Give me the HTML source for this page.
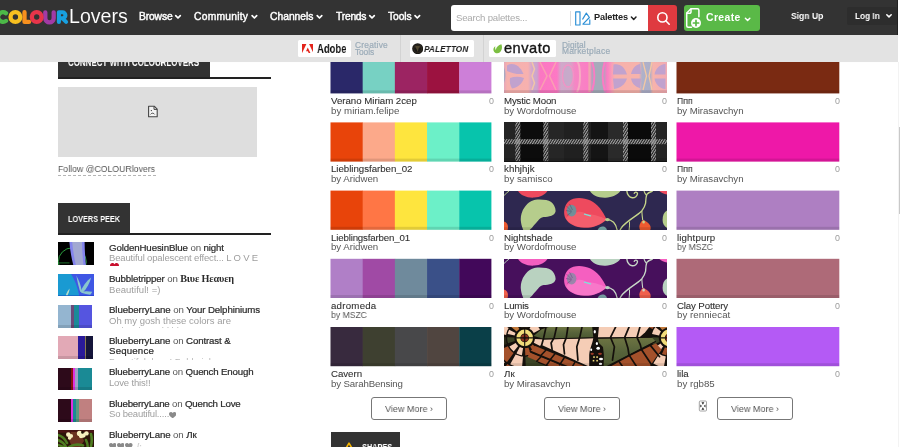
<!DOCTYPE html>
<html><head><meta charset="utf-8"><title>COLOURlovers</title>
<style>
*{box-sizing:border-box;margin:0;padding:0}
html,body{width:900px;height:447px;overflow:hidden;background:#fff}
body{position:relative;font-family:"Liberation Sans",sans-serif}
.a{position:absolute}
.t{will-change:transform;position:absolute;white-space:nowrap;line-height:1;font-family:"Liberation Sans",sans-serif}
.m{-webkit-text-stroke:0.22px #2b2b2b}
.on{color:#555}
.pal{position:absolute;display:flex;overflow:hidden}
.pal i{display:block;height:100%;flex:0 0 32.2px}
.sh{position:absolute;left:0;right:0;bottom:0;height:3px;background:rgba(0,0,0,.11)}
.btn{position:absolute;width:76px;height:23px;border:1px solid #777;border-radius:3px;background:#fff}
.th{position:absolute;left:58px;width:35.6px;height:22.7px;overflow:hidden}
.th i{position:absolute;top:0;bottom:0;display:block}
svg{position:absolute;display:block;overflow:hidden}
.gs{font-family:"Liberation Serif",serif;font-weight:700;-webkit-text-stroke:0;font-size:10.2px}
.clip{display:inline-block;overflow:hidden;vertical-align:top}

</style></head>
<body>
<!-- ===== sidebar (under the sponsor bar) ===== -->
<div class="a" style="left:58px;top:50px;width:152px;height:28.6px;background:#333"></div>
<div class="a" style="left:58px;top:76.6px;width:213px;height:2px;background:#222"></div>
<div class="a" style="left:58px;top:86.8px;width:199.2px;height:70.5px;background:#dedede"></div>
<svg style="left:147px;top:104.6px" width="12" height="13" viewBox="0 0 12 13"><path d="M1.6 1.2h5.6l3 3v7.6H1.6z" fill="#f4f4f4" stroke="#444" stroke-width="1.1" stroke-linejoin="round"/><path d="M7 1.4v3h3" fill="none" stroke="#444" stroke-width="1"/><path d="M3.6 9.4c.8-1.6 3.2-1.6 4 0M3.8 5.6h1.2" fill="none" stroke="#444" stroke-width="1"/></svg>
<div class="a" style="left:58px;top:174.6px;width:97.5px;height:0;border-top:1px dashed #b5b5b5"></div>

<div class="a" style="left:58px;top:203.2px;width:71.6px;height:31.6px;background:#333"></div>
<div class="a" style="left:58px;top:233px;width:213px;height:1.9px;background:#222"></div>

<!-- ===== palettes ===== -->
<svg style="left:0;top:0" width="900" height="447" viewBox="0 0 900 447"><rect x="330.50" y="54.2" width="32.48" height="39.2" fill="#2a2869"/><rect x="362.68" y="54.2" width="32.48" height="39.2" fill="#77d1c3"/><rect x="394.86" y="54.2" width="32.48" height="39.2" fill="#9c2462"/><rect x="427.04" y="54.2" width="32.48" height="39.2" fill="#9c1240"/><rect x="459.22" y="54.2" width="32.18" height="39.2" fill="#cd7fd8"/><rect x="330.5" y="90.4" width="160.9" height="3" fill="#000" opacity=".11"/><rect x="676.5" y="54.2" width="162.8" height="39.2" fill="#7a2a12"/><rect x="676.5" y="90.4" width="162.8" height="3" fill="#000" opacity=".11"/><rect x="330.50" y="122.4" width="32.48" height="39.2" fill="#e8440a"/><rect x="362.68" y="122.4" width="32.48" height="39.2" fill="#fca98a"/><rect x="394.86" y="122.4" width="32.48" height="39.2" fill="#fee53e"/><rect x="427.04" y="122.4" width="32.48" height="39.2" fill="#6cf0c8"/><rect x="459.22" y="122.4" width="32.18" height="39.2" fill="#07c4ac"/><rect x="330.5" y="158.6" width="160.9" height="3" fill="#000" opacity=".11"/><rect x="676.5" y="122.4" width="162.8" height="39.2" fill="#ee18a8"/><rect x="676.5" y="158.6" width="162.8" height="3" fill="#000" opacity=".11"/><rect x="330.50" y="190.6" width="32.48" height="39.2" fill="#e8440a"/><rect x="362.68" y="190.6" width="32.48" height="39.2" fill="#ff7645"/><rect x="394.86" y="190.6" width="32.48" height="39.2" fill="#fee53e"/><rect x="427.04" y="190.6" width="32.48" height="39.2" fill="#6cf0c8"/><rect x="459.22" y="190.6" width="32.18" height="39.2" fill="#07c4ac"/><rect x="330.5" y="226.8" width="160.9" height="3" fill="#000" opacity=".11"/><rect x="676.5" y="190.6" width="162.8" height="39.2" fill="#ae7fc2"/><rect x="676.5" y="226.8" width="162.8" height="3" fill="#000" opacity=".11"/><rect x="330.50" y="258.8" width="32.48" height="39.2" fill="#b07fc7"/><rect x="362.68" y="258.8" width="32.48" height="39.2" fill="#a04aa5"/><rect x="394.86" y="258.8" width="32.48" height="39.2" fill="#6f8a9c"/><rect x="427.04" y="258.8" width="32.48" height="39.2" fill="#3a5088"/><rect x="459.22" y="258.8" width="32.18" height="39.2" fill="#42085a"/><rect x="330.5" y="295.0" width="160.9" height="3" fill="#000" opacity=".11"/><rect x="676.5" y="258.8" width="162.8" height="39.2" fill="#ae6a78"/><rect x="676.5" y="295.0" width="162.8" height="3" fill="#000" opacity=".11"/><rect x="330.50" y="327.0" width="32.48" height="39.2" fill="#382a3e"/><rect x="362.68" y="327.0" width="32.48" height="39.2" fill="#3e4030"/><rect x="394.86" y="327.0" width="32.48" height="39.2" fill="#48484a"/><rect x="427.04" y="327.0" width="32.48" height="39.2" fill="#504540"/><rect x="459.22" y="327.0" width="32.18" height="39.2" fill="#0a3f48"/><rect x="330.5" y="363.2" width="160.9" height="3" fill="#000" opacity=".11"/><rect x="676.5" y="327.0" width="162.8" height="39.2" fill="#b45af5"/><rect x="676.5" y="363.2" width="162.8" height="3" fill="#000" opacity=".11"/></svg>
<svg style="left:503.5px;top:54.2px;background:#f0a0b8" width="163" height="39.2" viewBox="0 0 163 39.2" preserveAspectRatio="none"><defs><linearGradient id="mm" x1="0" x2="1" y1="0" y2="0"><stop offset="0.0000" stop-color="#e3a4b8"/><stop offset="0.0184" stop-color="#f6aeaa"/><stop offset="0.1472" stop-color="#f7aeac"/><stop offset="0.1718" stop-color="#cfa4cc"/><stop offset="0.2025" stop-color="#c8a2cc"/><stop offset="0.2209" stop-color="#fb72c0"/><stop offset="0.3252" stop-color="#fd74c2"/><stop offset="0.3497" stop-color="#cfa6c8"/><stop offset="0.4049" stop-color="#d2a2c6"/><stop offset="0.4356" stop-color="#f582c2"/><stop offset="0.5215" stop-color="#fb78c2"/><stop offset="0.5460" stop-color="#a4a8b8"/><stop offset="0.6074" stop-color="#a2a8b8"/><stop offset="0.6319" stop-color="#fb76c2"/><stop offset="0.6626" stop-color="#f99cb4"/><stop offset="0.6810" stop-color="#f7aea8"/><stop offset="0.8282" stop-color="#f7b0a8"/><stop offset="0.8466" stop-color="#acaec8"/><stop offset="0.8957" stop-color="#aaacc6"/><stop offset="0.9141" stop-color="#f7b0a8"/><stop offset="1.0000" stop-color="#f2a8b0"/></linearGradient><filter id="mb" x="-5%" y="-5%" width="110%" height="110%"><feGaussianBlur stdDeviation=".7"/></filter></defs><rect width="163" height="39.2" fill="url(#mm)"/><g filter="url(#mb)"><g fill="#bf9fcc"><path d="M3 11.500c5-3 12-1.500 16.500 8.500-6 .5-11.500-.5-16.500-3z"/><path d="M6 24c4.500-1.500 9.500-1.500 14 0-2 6-6 9.500-12 10.500-2-3-2.500-7-2-10.500z"/><path d="M0 13v16c2-5 2-11 0-16z" fill="#a6a6c0"/><path d="M109.500 10.500c6-1.500 11 2 13.500 10h-14z"/><path d="M109 24.500h14c-2 6-6 9.500-13 10.500z"/><path d="M127 20c1-5 4-9 9-10l1 10z"/><path d="M127 24.500h10l-1 9.500c-5-1-8-4.500-9-9.500z"/><path d="M150.500 20.500c1-6 5-10 11-10.500v10.500z"/><path d="M150.500 24.500h11V35c-6-.5-10-4.500-11-10.500z"/></g><g fill="none" stroke="#f9a8aa" stroke-width="1.500" opacity=".8"><path d="M36 8l7 14-7 14M52 8l-6.500 14 6.500 14"/></g><ellipse cx="64" cy="22" rx="5.500" ry="11" fill="#c4a8c8" stroke="#f88cc4" stroke-width="1.400" opacity=".85"/><path d="M73 7c4 5 4 25 0 31" fill="none" stroke="#f7a8c0" stroke-width="2"/><path d="M88 7c3 9 3 21 0 30M101 7c-3 9-3 21 0 30" fill="none" stroke="#fb76c2" stroke-width="2.100"/><path d="M85.500 7v31" stroke="#f0a2ac" stroke-width="2.300"/><path d="M139 8l3.500 14-3.500 14M148 8l-3 14 3 14" fill="none" stroke="#f4c6a0" stroke-width="1.300"/><path d="M28 8l2.500 7-2.500 7 2.500 7-2.500 7" fill="none" stroke="#f1c4a4" stroke-width="1.500"/></g><rect width="163" height="39.2" fill="#fff" opacity=".04"/><rect x="0" y="36.2" width="163" height="3" fill="#000" opacity=".11"/></svg>
<svg style="left:503.5px;top:122.4px;background:#111" width="163" height="39.2" viewBox="0 0 163 39.2" preserveAspectRatio="none"><defs><pattern id="hz" width="2.200" height="2.200" patternUnits="userSpaceOnUse" patternTransform="rotate(-58)"><rect width="2.200" height="2.200" fill="#1c1c1c"/><rect width="2.200" height="1.100" fill="#a6a6a6"/></pattern></defs><rect x="0" y="0" width="15.8" height="39.2" fill="#242424"/><rect x="15.5" y="0" width="28.8" height="39.2" fill="#0c0c0c"/><rect x="44" y="0" width="16.3" height="39.2" fill="#262626"/><rect x="60" y="0" width="27.3" height="39.2" fill="#202020"/><rect x="87" y="0" width="17.3" height="39.2" fill="#141414"/><rect x="104" y="0" width="20.3" height="39.2" fill="#2a2a2a"/><rect x="124" y="0" width="25.3" height="39.2" fill="#0a0a0a"/><rect x="149" y="0" width="14.3" height="39.2" fill="#242424"/><rect x="0" y="17.200" width="163" height="5" fill="url(#hz)"/><rect x="11.3" y="0" width="5" height="39.2" fill="url(#hz)"/><rect x="11.3" y="17.200" width="5" height="5" fill="#a8a8a8" opacity=".55"/><rect x="39.3" y="0" width="5" height="39.2" fill="url(#hz)"/><rect x="39.3" y="17.200" width="5" height="5" fill="#a8a8a8" opacity=".55"/><rect x="79.3" y="0" width="5" height="39.2" fill="url(#hz)"/><rect x="79.3" y="17.200" width="5" height="5" fill="#a8a8a8" opacity=".55"/><rect x="119" y="0" width="5" height="39.2" fill="url(#hz)"/><rect x="119" y="17.200" width="5" height="5" fill="#a8a8a8" opacity=".55"/><rect x="147" y="0" width="5" height="39.2" fill="url(#hz)"/><rect x="147" y="17.200" width="5" height="5" fill="#a8a8a8" opacity=".55"/><rect x="0" y="36.2" width="163" height="3" fill="#000" opacity=".11"/></svg>
<svg style="left:503.5px;top:190.6px;background:#2e2850" width="163" height="39.2" viewBox="0 0 163 39.2" preserveAspectRatio="none"><path d="M0 4.500C2 2.500 3.500 1.200 5 0" fill="none" stroke="#b6cd8c" stroke-width="1"/><path d="M13.500 -1C16 4 22 7 30 6.600c7-.4 12-3.400 14-7.600z" fill="#ee4a5e"/><path d="M26.200 10.700C28 9.500 30 8.900 31.500 8.700 35 8.300 39 8.500 42.200 9.100 46 9.900 49 12 50.200 14.700 51.300 16.700 51.800 18.700 51.500 20.700 51 22.700 49.500 24 47.500 24.700 45 25.600 42 25.800 39.500 26.100 37.300 26.600 35.500 27.900 34.200 29.400 32.600 31 31.400 32.600 30.200 34.100 28.600 36.200 26.800 38.400 24.800 39.600L19.500 39.600C18 36 17 32.600 16.800 29.400 16.600 27 16.900 24.800 17.500 22.700 18.200 20.200 19.300 18 20.800 16.100 22.300 13.900 24.100 12 26.200 10.700z" fill="#b6cd8c"/><path d="M65 10C69.500 6 79 6 86.500 9.400c7 3.200 12.400 10.600 16.200 19C96 34.400 88 37.200 80 36.800c-8.400-.4-15.600-3.800-18.600-9.600C59 22.400 60 14.200 65 10z" fill="#ee4a5e"/><path d="M70 22.600c4-2.800 9-2.200 12 .2 5 .2 14 2.200 20.400 5.600C96 34 88 36.800 80 36.400c-8-.4-15-3.600-18-9.200 2.400-2.200 5-3.600 8-4.600z" fill="#f9707a" opacity=".55"/><ellipse cx="67.600" cy="19.600" rx="4.800" ry="5.800" fill="#5a9aa2" opacity=".85"/><path d="M62.400 15l5 5M62 19.500l5.500 1M63 24.500l4.600-3.500M65.500 13l3 6" stroke="#2e2850" stroke-width=".5" opacity=".6"/><path d="M80.500 23.200l6 1.700" stroke="#7fe0d8" stroke-width="1.300" stroke-linecap="round"/><path d="M85.500 -1c2 5 8.500 8 16 7.700 7.500-.3 13.500-3.300 16-8.700z" fill="#b6cd8c"/><path d="M102.200 28.400c3 .2 5.600 1.100 7.400 2.900 1.900 2 3 4.800 3.600 7.900" fill="none" stroke="#c6d68a" stroke-width="1.250"/><ellipse cx="103.400" cy="28.600" rx="2.400" ry="1.600" fill="#b6cd8c"/><path d="M122.900 .2C123 2 123.600 3.400 124.600 4.600 125.600 5.900 126.800 6.600 128.200 6.800 129.600 6.900 130.800 6.500 131.800 5.700 132.800 4.900 133.400 3.900 133.500 2.800 133.500 1.900 132.900 1.300 132 1.100 131.200 1 130.600 1.500 130.300 2.300" fill="none" stroke="#c6d68a" stroke-width="1.400" stroke-linecap="round"/><path d="M148.700 0C146 .8 144 1.900 142.800 3.400 141.800 6 141.800 9 141.600 12.200 141 15.200 139.600 17.800 137.700 20 135 22.600 132 24.700 128.800 26.900 125 29.600 121.800 32 119 34.800 117.800 36.100 116.800 37.400 116 39" fill="none" stroke="#c6d68a" stroke-width="1.350"/><path d="M140 0c.6 1.800 1.400 3.200 2.500 4.400" fill="none" stroke="#c6d68a" stroke-width="1.100"/><path d="M137.800 20c.2 3 .5 6 .9 9" fill="none" stroke="#c6d68a" stroke-width="1.100"/><path d="M125.500 30.500c.2 3-.1 6-.4 8.700" fill="none" stroke="#c6d68a" stroke-width="1"/><path d="M139 28.900c2.600 1 5.600 2.600 7 5.400 1.200 2.400.6 4.400-.2 5.400h-9.400c-1-1.600-1.300-3.600-.8-5.600.5-2 1.700-3.800 3.400-5.200z" fill="#ee5a30"/><ellipse cx="139.600" cy="30.900" rx="1.300" ry="1.500" fill="#c6d68a"/><path d="M154.500 -1c2 2.600 5 4 8.500 4.400V-1z" fill="#ee4a5e"/><path d="M0 30.500c2.500.5 4 3 4 6 0 1-.2 2-.6 2.700H0z" fill="#ee5a30"/><path d="M163 19.500c-3 1.500-4.400 5-4.400 9.500 0 3.500 1.600 6.500 4.400 8z" fill="#b6cd8c"/><path d="M93.500 39.200c1-2.400 3-3.600 5.500-3.600 2 0 3.500 1.400 4 3.600z" fill="#8fd0c4" opacity=".8"/><rect x="0" y="36.2" width="163" height="3" fill="#000" opacity=".11"/></svg>
<svg style="left:503.5px;top:258.8px;background:#47105c" width="163" height="39.2" viewBox="0 0 163 39.2" preserveAspectRatio="none"><path d="M0 4.500C2 2.500 3.500 1.200 5 0" fill="none" stroke="#b9d2c0" stroke-width="1"/><path d="M13.500 -1C16 4 22 7 30 6.600c7-.4 12-3.400 14-7.600z" fill="#f55fc0"/><path d="M26.200 10.700C28 9.500 30 8.900 31.500 8.700 35 8.300 39 8.500 42.200 9.100 46 9.900 49 12 50.200 14.700 51.300 16.700 51.800 18.700 51.500 20.700 51 22.700 49.500 24 47.500 24.700 45 25.600 42 25.800 39.500 26.100 37.300 26.600 35.500 27.900 34.200 29.400 32.600 31 31.400 32.600 30.200 34.100 28.600 36.200 26.800 38.400 24.800 39.600L19.500 39.600C18 36 17 32.600 16.800 29.400 16.600 27 16.900 24.800 17.500 22.700 18.200 20.200 19.300 18 20.800 16.100 22.300 13.900 24.100 12 26.200 10.700z" fill="#b9d2c0"/><path d="M65 10C69.500 6 79 6 86.500 9.400c7 3.200 12.400 10.600 16.200 19C96 34.400 88 37.200 80 36.800c-8.400-.4-15.600-3.800-18.600-9.600C59 22.400 60 14.200 65 10z" fill="#f55fc0"/><path d="M70 22.600c4-2.800 9-2.200 12 .2 5 .2 14 2.200 20.400 5.600C96 34 88 36.800 80 36.400c-8-.4-15-3.600-18-9.200 2.400-2.200 5-3.600 8-4.600z" fill="#f98ad0" opacity=".55"/><ellipse cx="67.600" cy="19.600" rx="4.800" ry="5.800" fill="#8a8aa6" opacity=".85"/><path d="M62.400 15l5 5M62 19.500l5.500 1M63 24.500l4.600-3.500M65.500 13l3 6" stroke="#47105c" stroke-width=".5" opacity=".6"/><path d="M80.500 23.200l6 1.700" stroke="#7fe0d8" stroke-width="1.300" stroke-linecap="round"/><path d="M85.500 -1c2 5 8.500 8 16 7.700 7.500-.3 13.500-3.300 16-8.700z" fill="#b9d2c0"/><path d="M102.200 28.400c3 .2 5.600 1.100 7.400 2.900 1.900 2 3 4.800 3.600 7.900" fill="none" stroke="#c8d8c8" stroke-width="1.250"/><ellipse cx="103.400" cy="28.600" rx="2.400" ry="1.600" fill="#b9d2c0"/><path d="M122.900 .2C123 2 123.600 3.400 124.600 4.600 125.600 5.900 126.800 6.600 128.200 6.800 129.600 6.900 130.800 6.500 131.800 5.700 132.800 4.900 133.400 3.900 133.500 2.800 133.500 1.900 132.900 1.300 132 1.100 131.200 1 130.600 1.500 130.300 2.300" fill="none" stroke="#c8d8c8" stroke-width="1.400" stroke-linecap="round"/><path d="M148.700 0C146 .8 144 1.900 142.800 3.400 141.800 6 141.800 9 141.600 12.200 141 15.200 139.600 17.800 137.700 20 135 22.600 132 24.700 128.800 26.900 125 29.600 121.800 32 119 34.800 117.800 36.100 116.800 37.400 116 39" fill="none" stroke="#c8d8c8" stroke-width="1.350"/><path d="M140 0c.6 1.800 1.400 3.200 2.500 4.400" fill="none" stroke="#c8d8c8" stroke-width="1.100"/><path d="M137.800 20c.2 3 .5 6 .9 9" fill="none" stroke="#c8d8c8" stroke-width="1.100"/><path d="M125.500 30.500c.2 3-.1 6-.4 8.700" fill="none" stroke="#c8d8c8" stroke-width="1"/><path d="M139 28.900c2.600 1 5.600 2.600 7 5.400 1.200 2.400.6 4.400-.2 5.400h-9.400c-1-1.600-1.300-3.600-.8-5.600.5-2 1.700-3.800 3.400-5.200z" fill="#f0604c"/><ellipse cx="139.600" cy="30.900" rx="1.300" ry="1.500" fill="#c8d8c8"/><path d="M154.500 -1c2 2.600 5 4 8.500 4.400V-1z" fill="#f55fc0"/><path d="M0 30.500c2.500.5 4 3 4 6 0 1-.2 2-.6 2.700H0z" fill="#f0604c"/><path d="M163 19.500c-3 1.500-4.400 5-4.400 9.500 0 3.500 1.600 6.500 4.400 8z" fill="#b9d2c0"/><path d="M93.500 39.200c1-2.400 3-3.600 5.500-3.600 2 0 3.500 1.400 4 3.600z" fill="#8fd0c4" opacity=".8"/><rect x="0" y="36.2" width="163" height="3" fill="#000" opacity=".11"/></svg>
<svg style="left:503.5px;top:327.0px;background:#15100c" width="163" height="39.2" viewBox="0 0 163 39.2" preserveAspectRatio="none"><defs><linearGradient id="gw" x1="0" x2="0" y1="0" y2="1"><stop offset="0" stop-color="#6d7442"/><stop offset=".5" stop-color="#56623a"/><stop offset="1" stop-color="#4c5830"/></linearGradient></defs><rect width="163" height="39.2" fill="#15100c"/><path d="M38.1 12.7L37.9 14.0L37.6 15.4L37.2 16.6L36.7 17.9L36.1 19.1L29.8 15.7L30.1 15.0L30.4 14.3L30.6 13.5L30.8 12.7L30.9 12.0z" fill="#f5cdb6"/><path d="M34.1 22.1L33.3 23.0L32.6 23.7L31.7 24.5L30.9 25.1L30.0 25.7L26.1 19.6L26.7 19.3L27.2 18.9L27.7 18.4L28.1 18.0L28.6 17.5z" fill="#a4512b"/><path d="M26.9 27.2L25.9 27.6L24.7 27.9L23.6 28.1L22.4 28.3L21.3 28.4L21.0 21.2L21.7 21.1L22.4 21.0L23.1 20.9L23.7 20.7L24.4 20.5z" fill="#a4512b"/><path d="M17.9 28.2L16.8 28.0L15.7 27.7L14.6 27.3L13.5 26.9L12.5 26.3L15.8 20.0L16.5 20.3L17.1 20.5L17.7 20.8L18.4 20.9L19.1 21.1z" fill="#f5cdb6"/><path d="M9.7 24.5L8.7 23.6L7.7 22.6L6.8 21.6L6.1 20.5L5.4 19.4L11.7 15.9L12.1 16.6L12.5 17.2L13.0 17.8L13.6 18.4L14.2 18.9z" fill="#f5cdb6"/><path d="M4.0 16.3L3.7 15.1L3.4 13.9L3.3 12.7L3.2 11.5L3.2 10.3L10.4 10.5L10.4 11.2L10.4 12.0L10.5 12.7L10.7 13.4L10.9 14.1z" fill="#3c4426"/><path d="M3.6 7.0L3.9 6.1L4.1 5.2L4.5 4.3L4.8 3.5L5.2 2.7L11.6 6.1L11.3 6.5L11.1 7.0L10.9 7.5L10.8 8.0L10.6 8.6z" fill="#f5cdb6"/><path d="M7.1 -0.1L7.9 -1.0L8.7 -1.9L9.7 -2.7L10.6 -3.4L11.7 -4.1L15.4 2.1L14.8 2.5L14.2 2.9L13.7 3.4L13.1 3.9L12.7 4.4z" fill="#c27a3c"/><path d="M15.0 -5.7L17.0 -6.2L19.2 -6.5L21.3 -6.6L23.4 -6.4L25.5 -5.9L23.5 1.0L22.3 0.7L21.0 0.6L19.8 0.6L18.5 0.8L17.3 1.1z" fill="#2a2216"/><path d="M28.9 -4.6L30.6 -3.5L32.2 -2.3L33.6 -0.9L34.9 0.7L36.0 2.4L29.7 5.9L29.1 4.9L28.3 4.0L27.5 3.1L26.5 2.4L25.5 1.8z" fill="#f5cdb6"/><path d="M34.7 37.4L32.2 38.6L29.7 39.5L27.1 40.2L24.5 40.6L21.8 40.9L21.4 29.7L23.1 29.5L24.7 29.2L26.3 28.8L27.9 28.2L29.4 27.5z" fill="#3c4426"/><path d="M18.0 40.8L15.5 40.4L13.1 39.9L10.7 39.2L8.4 38.3L6.2 37.2L11.6 27.4L13.0 28.1L14.4 28.6L15.9 29.1L17.4 29.4L19.0 29.6z" fill="#f5cdb6"/><path d="M3.0 35.1L0.7 33.3L-1.3 31.3L-3.2 29.0L-4.8 26.7L-6.2 24.1L3.8 19.2L4.7 20.8L5.7 22.3L6.9 23.7L8.2 24.9L9.6 26.1z" fill="#a4512b"/><path d="M-7.7 20.6L-8.3 18.5L-8.8 16.4L-9.1 14.3L-9.3 12.1L-9.3 9.9L1.9 10.3L1.9 11.6L2.0 13.0L2.2 14.3L2.5 15.7L2.9 16.9z" fill="#2a2a18"/><path d="M-8.9 6.1L-8.5 3.8L-7.8 1.5L-7.0 -0.7L-6.0 -2.9L-4.8 -4.9L4.7 1.0L4.0 2.3L3.3 3.6L2.8 5.0L2.4 6.4L2.1 7.9z" fill="#f5cdb6"/><path d="M-2.6 -8.1L-0.6 -10.3L1.7 -12.3L4.1 -14.1L6.6 -15.6L9.3 -16.9L13.6 -6.5L11.9 -5.7L10.3 -4.8L8.8 -3.6L7.4 -2.4L6.1 -1.0z" fill="#a4512b"/><path d="M13.0 -18.1L16.4 -18.8L19.8 -19.1L23.2 -19.0L26.5 -18.5L29.9 -17.7L26.4 -7.0L24.4 -7.5L22.2 -7.8L20.1 -7.9L18.0 -7.7L15.9 -7.3z" fill="#c27a3c"/><path d="M15.1 54.5L11.1 53.8L7.2 52.8L3.4 51.3L-0.3 49.6L-3.7 47.5L3.3 37.0L5.7 38.5L8.3 39.8L11.0 40.8L13.8 41.5L16.7 42.0z" fill="#a4512b"/><path d="M-7.2 44.9L-10.5 41.9L-13.5 38.5L-16.2 34.9L-18.5 31.0L-20.3 26.9L-8.6 22.3L-7.3 25.2L-5.6 28.0L-3.7 30.6L-1.6 33.0L0.8 35.2z" fill="#f5cdb6"/><path d="M162.4 28.2L161.5 28.0L160.6 27.8L159.7 27.5L158.8 27.2L158.0 26.9L160.9 20.3L161.4 20.5L161.9 20.7L162.4 20.8L163.0 21.0L163.5 21.1z" fill="#a4512b"/><path d="M155.1 25.2L154.0 24.4L153.1 23.6L152.2 22.7L151.3 21.7L150.6 20.7L156.6 16.6L157.0 17.3L157.5 17.8L158.0 18.4L158.6 18.9L159.2 19.3z" fill="#f5cdb6"/><path d="M149.0 17.7L148.5 16.3L148.0 14.8L147.8 13.3L147.6 11.8L147.6 10.3L154.8 10.5L154.8 11.4L154.9 12.3L155.1 13.2L155.3 14.1L155.6 14.9z" fill="#3c4426"/><path d="M148.0 7.0L148.5 5.5L149.0 4.1L149.6 2.7L150.4 1.4L151.3 0.1L157.0 4.5L156.5 5.3L156.0 6.1L155.6 6.9L155.3 7.7L155.1 8.6z" fill="#f5cdb6"/><path d="M153.6 -2.3L155.0 -3.4L156.5 -4.4L158.1 -5.1L159.7 -5.8L161.5 -6.2L163.0 0.8L161.9 1.1L161.0 1.5L160.0 1.9L159.2 2.5L158.3 3.1z" fill="#c27a3c"/><path d="M159.8 40.4L157.6 39.9L155.4 39.3L153.3 38.5L151.3 37.5L149.3 36.4L155.2 26.9L156.4 27.6L157.7 28.2L159.0 28.7L160.4 29.1L161.8 29.4z" fill="#f5cdb6"/><path d="M146.1 34.1L144.5 32.7L143.0 31.2L141.6 29.5L140.3 27.8L139.2 26.0L148.8 20.3L149.6 21.5L150.4 22.6L151.2 23.6L152.2 24.6L153.2 25.5z" fill="#a4512b"/><path d="M138.7 -3.3L139.7 -5.1L140.8 -6.8L142.1 -8.4L143.5 -9.9L144.9 -11.3L152.5 -3.0L151.5 -2.1L150.7 -1.2L149.9 -0.2L149.2 0.9L148.5 2.0z" fill="#a4512b"/><path d="M148.0 -13.7L150.7 -15.4L153.6 -16.8L156.6 -17.9L159.7 -18.6L162.9 -19.0L163.7 -7.9L161.7 -7.6L159.8 -7.1L157.9 -6.5L156.1 -5.6L154.4 -4.5z" fill="#f5cdb6"/><path d="M29.6 9.1L37.7 2.3L44.9 0.1L92.2 0.1L92.2 10.4L39.7 11.7z" fill="url(#gw)" /><path d="M31.0 12.6L39.7 12.4L92.2 11.1L92.2 42.8L37.7 18.1L32.0 15.1z" fill="#f5cdb6" /><path d="M31.3 19.0L92.2 44.1L67.5 42.3L26.5 24.0z" fill="#a4512b" /><path d="M25.9 25.4L65.4 41.9L52.1 41.9L23.5 30.1z" fill="#a4512b" /><path d="M22.7 31.5L47.9 41.2L35.6 41.2L22.2 36.1z" fill="#3c4426" /><path d="M52.6 0.1L50.2 10.6L47.1 16.0L48.1 22.4" fill="none" stroke="#15100c" stroke-width="1.7" stroke-linejoin="round" stroke-linecap="round"/><path d="M63.9 0.1L62.3 10.6L59.5 17.6L60.5 27.0" fill="none" stroke="#15100c" stroke-width="1.7" stroke-linejoin="round" stroke-linecap="round"/><path d="M78.0 0.1L75.7 10.6L72.8 19.8L73.9 33.2" fill="none" stroke="#15100c" stroke-width="1.7" stroke-linejoin="round" stroke-linecap="round"/><path d="M41.8 1.1L39.5 11.6L37.7 18.1" fill="none" stroke="#15100c" stroke-width="1.7" stroke-linejoin="round" stroke-linecap="round"/><path d="M41.8 23.3L36.8 28.5" fill="none" stroke="#15100c" stroke-width="1.5" stroke-linejoin="round" stroke-linecap="round"/><path d="M50.8 27.0L46.1 32.8" fill="none" stroke="#15100c" stroke-width="1.5" stroke-linejoin="round" stroke-linecap="round"/><path d="M60.1 31.0L55.6 37.9" fill="none" stroke="#15100c" stroke-width="1.5" stroke-linejoin="round" stroke-linecap="round"/><path d="M70.8 35.3L67.5 41.2" fill="none" stroke="#15100c" stroke-width="1.5" stroke-linejoin="round" stroke-linecap="round"/><path d="M36.8 30.1L32.7 34.2" fill="none" stroke="#15100c" stroke-width="1.5" stroke-linejoin="round" stroke-linecap="round"/><path d="M45.7 33.8L42.4 38.2" fill="none" stroke="#15100c" stroke-width="1.5" stroke-linejoin="round" stroke-linecap="round"/><path d="M26.5 24.4L68.5 41.9" fill="none" stroke="#15100c" stroke-width="1.6" stroke-linejoin="round" stroke-linecap="round"/><path d="M39.7 12.0L92.2 10.7" fill="none" stroke="#15100c" stroke-width="1.0" stroke-linejoin="round" stroke-linecap="round"/><path d="M88.2 0.1L94.9 0.1L93.9 10.4C94.9 16.5 99.6 20.7 99.6 27.9L99.0 40.2L85.2 40.2L85.2 27.9C85.7 20.7 88.8 16.5 89.3 10.4z" fill="#15100c"/><ellipse cx="90.8" cy="4.7" rx="1.1" ry="1.7" fill="#fff"/><ellipse cx="92.9" cy="16.5" rx="1.1" ry="1.5" fill="#fff"/><ellipse cx="94.2" cy="21.2" rx="1.8" ry="1.5" fill="#fff"/><ellipse cx="88.2" cy="26.8" rx="1.7" ry="1.1" fill="#9a3a26"/><ellipse cx="96.0" cy="26.8" rx="2" ry="1.1" fill="#9a3a26"/><ellipse cx="97.0" cy="32.0" rx="2" ry="1.3" fill="#fff"/><ellipse cx="96.5" cy="36.9" rx="1.7" ry="1.1" fill="#fff"/><ellipse cx="87.2" cy="22.7" rx="1" ry="1.3" fill="#fff"/><rect x="89.2" y="29.3" width="1.600" height="1.600" fill="#f2dc7a"/><rect x="92.3" y="29.3" width="1.600" height="1.600" fill="#f2dc7a"/><rect x="88.7" y="32.9" width="1.600" height="1.600" fill="#f2dc7a"/><rect x="92.3" y="32.9" width="1.600" height="1.600" fill="#f2dc7a"/><path d="M94.9 0.1L145.3 0.1L141.2 5.2L135.6 10.2L93.9 10.6z" fill="#f5cdb6" /><path d="M93.9 11.6L147.9 10.6L151.5 14.3L124.8 28.1L101.6 40.2L99.6 40.2L99.9 27.9L99.0 20.1L94.9 16.0z" fill="url(#gw)" /><path d="M105.2 40.2L126.0 29.1L152.0 16.3L157.7 22.7L151.5 31.0L145.3 40.2z" fill="#a4512b" /><path d="M111.6 0.1L106.5 10.4L110.4 19.8L108.5 33.2" fill="none" stroke="#15100c" stroke-width="1.7" stroke-linejoin="round" stroke-linecap="round"/><path d="M125.0 0.1L120.7 10.4L123.9 20.9L125.0 27.9" fill="none" stroke="#15100c" stroke-width="1.7" stroke-linejoin="round" stroke-linecap="round"/><path d="M135.9 0.1L133.0 10.4L136.3 17.6L137.3 21.9" fill="none" stroke="#15100c" stroke-width="1.7" stroke-linejoin="round" stroke-linecap="round"/><path d="M93.9 11.1L147.9 10.2" fill="none" stroke="#15100c" stroke-width="1.1" stroke-linejoin="round" stroke-linecap="round"/><path d="M101.6 40.2L124.8 28.2L151.5 14.5" fill="none" stroke="#15100c" stroke-width="1.1" stroke-linejoin="round" stroke-linecap="round"/><path d="M125.6 28.9L133.0 40.2" fill="none" stroke="#15100c" stroke-width="1.7" stroke-linejoin="round" stroke-linecap="round"/><path d="M137.6 22.7L147.4 37.6" fill="none" stroke="#15100c" stroke-width="1.7" stroke-linejoin="round" stroke-linecap="round"/><path d="M146.4 18.4L155.6 29.7" fill="none" stroke="#15100c" stroke-width="1.7" stroke-linejoin="round" stroke-linecap="round"/><path d="M115.0 34.6L119.1 40.2" fill="none" stroke="#15100c" stroke-width="1.7" stroke-linejoin="round" stroke-linecap="round"/><circle cx="20.7" cy="10.9" r="9.300" fill="#15100c"/><circle cx="20.7" cy="10.9" r="6.300" fill="none" stroke="#f2dc7a" stroke-width="4"/><circle cx="20.7" cy="10.9" r="3.700" fill="#8c3420"/><circle cx="20.7" cy="10.9" r="1.700" fill="#5a2418"/><path d="M11.7 10.9h18M20.7 1.9v18" stroke="#15100c" stroke-width="1.100"/><circle cx="165.1" cy="10.9" r="9.300" fill="#15100c"/><circle cx="165.1" cy="10.9" r="6.300" fill="none" stroke="#f2dc7a" stroke-width="4"/><circle cx="165.1" cy="10.9" r="3.700" fill="#8c3420"/><circle cx="165.1" cy="10.9" r="1.700" fill="#5a2418"/><path d="M156.1 10.9h18M165.1 1.9v18" stroke="#15100c" stroke-width="1.100"/><rect x="0" y="36.2" width="163" height="3" fill="#000" opacity=".11"/></svg>
<div class="btn" style="left:371.0px;top:397.3px"></div>
<div class="btn" style="left:544.0px;top:397.3px"></div>
<div class="btn" style="left:717.0px;top:397.3px"></div>
<div class="a" style="left:330.5px;top:431.8px;width:69px;height:20px;background:#333"></div>
<svg style="left:343.5px;top:441.5px" width="10" height="8" viewBox="0 0 10 8"><path d="M5 1.2L9.4 8.6H.6z" fill="none" stroke="#f5b400" stroke-width="1.6" stroke-linejoin="round"/></svg>
<svg style="left:698px;top:400px" width="10" height="12" viewBox="0 0 10 12"><rect x="1.300" y="1" width="7.200" height="10" rx="1" fill="#fff" stroke="#9a9a9a" stroke-width=".9"/><path d="M3.500 2.200h2.800L4.900 4.800zM3.500 9.800h2.800L4.900 7.200zM2.300 4.400v3.200L4 6zM7.500 4.400v3.200L5.800 6z" fill="#2a2a2a"/></svg>

<!-- ===== thumbs ===== -->
<div class="th" style="top:242.2px;background:#000" id="th0">
<svg style="left:0;top:0" width="36" height="23" viewBox="0 0 36 23"><circle cx="14.300" cy="19.800" r="14" fill="none" stroke="#2a9a3c" stroke-width="1"/><path d="M0 20.900h11.500" stroke="#1f7a30" stroke-width=".9"/><path d="M11.400 0h15.200c.1 8 .5 15 1.300 23H15.300C13.300 15 12 8 11.400 0z" fill="#8484ee"/><path d="M14.200 0h9.800c.1 8 .6 15 1.500 23h-7.600C16 15 14.800 8 14.200 0z" fill="#a2a8d2"/></svg></div>
<div class="th" style="top:273.6px;background:#1a98d0" id="th1">
<svg style="left:0;top:0" width="36" height="23" viewBox="0 0 36 23"><rect width="36" height="23" fill="#1a9ad2"/><path d="M13 0h23v23H21.500C20 14 17 6 13 0z" fill="#3f57e4"/><g fill="#93d3cb" opacity=".9"><path d="M22.200 18c-1.600-5.600-3-11-3.900-16.600 2.800 4.800 4.600 10 5.500 15.800z"/><path d="M22.600 17.600c2-5.400 5.600-10.400 10.600-14.200-1.600 6-4.400 11-8.600 15.400z"/><path d="M23 17.800c3.600-.9 7.400-.9 11.200 0-.6 1.200-1.200 2.200-2 3-3-.4-6-1-8.800-2z"/></g><path d="M7.800 21.200c.9-2.600 2.200-4.800 3.800-6.600-.3 2.600-1 4.800-2.100 6.800z" fill="#b8dcc8"/><rect y="21.300" width="36" height="1.700" fill="#1030b8" opacity=".55"/></svg></div>
<div class="th" style="top:305px;width:34.4px"><i style="left:0;width:13px;background:#94b5d0"></i><i style="left:12.9px;width:2.7px;background:#6a4a7a"></i><i style="left:15.5px;width:5.6px;background:#1a8a98"></i><i style="left:21px;width:14px;background:#5555e0"></i><b class="sh"></b></div>
<div class="th" style="top:336.4px;width:35px"><i style="left:0;width:19.7px;background:#e2a9b6"></i><i style="left:19.6px;width:7.5px;background:#2a1a9a"></i><i style="left:27px;width:1.2px;background:#8a7a50"></i><i style="left:28.1px;width:7px;background:#15153a"></i><b class="sh"></b></div>
<div class="th" style="top:367.8px;width:34.2px"><i style="left:0;width:13px;background:#2d0a1a"></i><i style="left:12.9px;width:2.6px;background:#8a1010"></i><i style="left:15.4px;width:1.8px;background:#e030e0"></i><i style="left:17.1px;width:3px;background:#a0a0c4"></i><i style="left:20px;width:14.3px;background:#1a8a95"></i><b class="sh"></b></div>
<div class="th" style="top:399.2px;width:34.2px"><i style="left:0;width:13px;background:#2d0a1a"></i><i style="left:12.9px;width:2.6px;background:#e030e0"></i><i style="left:15.4px;width:2.6px;background:#1a8a95"></i><i style="left:17.9px;width:3.2px;background:#5a9a80"></i><i style="left:21px;width:13.3px;background:#c08080"></i><b class="sh"></b></div>
<div class="th" style="top:430.4px;background:#2a1408" id="th6">
<svg style="left:0;top:0" width="36" height="23" viewBox="0 0 36 23"><rect width="36" height="23" fill="#2c150a"/><path d="M0 1.500h36" stroke="#4a1414" stroke-width="2.500"/><path d="M13 2h10l3 9-4 6h-8l-3-7z" fill="#6a3320"/><g fill="none" stroke="#4f7d22" stroke-width="2.600" stroke-linecap="round"><path d="M0 5c4 1 7 4 9 8M0 10c3 1 6 3 8 7M0 15c3 .5 6 2 8 5M11 17c4-2.500 9-3 14-1.500M9 22c5-3 11-3.500 17-1M28 10c1.500 3 2 6 1.500 9M33 4c1 4 1 8 0 12"/></g><g fill="#f7f0c0"><circle cx="10.300" cy="4.600" r="2.300"/><circle cx="13" cy="6" r="2.100"/><circle cx="11.600" cy="8" r="1.800"/><circle cx="21.500" cy="3.400" r="2.600"/><circle cx="25" cy="5" r="2.700"/><circle cx="28.500" cy="3.400" r="2.200"/><circle cx="23" cy="6.300" r="2"/></g><circle cx="24.500" cy="2.400" r="1.300" fill="#1c1208"/></svg></div>

<!-- hearts in comments -->
<svg style="left:109.7px;top:263.4px" width="9" height="2.5" viewBox="0 0 8 2.2" preserveAspectRatio="none"><path d="M4 7C1.500 5 0 3.600 0 2.100 0 .9.900 0 2.100 0 2.900 0 3.600.4 4 1.100 4.400.4 5.100 0 5.900 0 7.100 0 8 .9 8 2.100 8 3.600 6.500 5 4 7z" fill="#c8102e"/></svg>
<svg style="left:168.7px;top:411.7px" width="7.4" height="6.3" viewBox="0 0 8 7" preserveAspectRatio="none"><path d="M4 7C1.500 5 0 3.600 0 2.100 0 .9.900 0 2.100 0 2.900 0 3.600.4 4 1.100 4.400.4 5.100 0 5.900 0 7.100 0 8 .9 8 2.100 8 3.600 6.500 5 4 7z" fill="#8a8a8a"/></svg>
<svg style="left:108.8px;top:443px" width="7.6" height="6.5" viewBox="0 0 8 7" preserveAspectRatio="none"><path d="M4 7C1.500 5 0 3.600 0 2.100 0 .9.900 0 2.100 0 2.900 0 3.600.4 4 1.100 4.400.4 5.100 0 5.900 0 7.100 0 8 .9 8 2.100 8 3.600 6.500 5 4 7z" fill="#8a8a8a"/></svg>
<svg style="left:116.9px;top:443px" width="7.6" height="6.5" viewBox="0 0 8 7" preserveAspectRatio="none"><path d="M4 7C1.500 5 0 3.600 0 2.100 0 .9.900 0 2.100 0 2.900 0 3.600.4 4 1.100 4.400.4 5.100 0 5.900 0 7.100 0 8 .9 8 2.100 8 3.600 6.500 5 4 7z" fill="#8a8a8a"/></svg>
<svg style="left:125.0px;top:443px" width="7.6" height="6.5" viewBox="0 0 8 7" preserveAspectRatio="none"><path d="M4 7C1.500 5 0 3.600 0 2.100 0 .9.900 0 2.100 0 2.900 0 3.600.4 4 1.100 4.400.4 5.100 0 5.900 0 7.100 0 8 .9 8 2.100 8 3.600 6.500 5 4 7z" fill="#8a8a8a"/></svg>


<!-- ===== CONNECT tab text (clipped by sponsor bar) ===== -->
<span class="t" id="connect" style="left:68px;top:57.4px;font-size:11px;font-weight:700;color:#fff;transform:scaleX(.722);transform-origin:0 0">CONNECT WITH COLOURLOVERS</span>

<!-- ===== sponsor bar ===== -->
<div class="a" style="left:0;top:34.6px;width:898px;height:27.2px;background:#e3e3e3;box-shadow:0 .4px .6px rgba(0,0,0,.12)"></div>
<div class="a" style="left:399.6px;top:35px;width:1px;height:26.6px;background:#d3d3d3"></div>
<div class="a" style="left:482.8px;top:35px;width:1px;height:26.6px;background:#d3d3d3"></div>
<div class="a" style="left:297.8px;top:40.3px;width:52.9px;height:16.5px;background:#fff;border-radius:1.5px"></div>
<div class="a" style="left:409.7px;top:40.3px;width:64.5px;height:16.5px;background:#fff;border-radius:1.5px"></div>
<div class="a" style="left:489.2px;top:40.3px;width:67px;height:16.5px;background:#fff;border-radius:1.5px"></div>
<!-- adobe -->
<svg style="left:301.6px;top:44.2px" width="11.5" height="9.2" viewBox="0 0 11.5 9.2"><path d="M0 0h4.400L0 9.200zM7.100 0h4.400v9.200zM5.750 3.400L8.500 9.200H6.700L5.900 7.300H4z" fill="#e3241b"/></svg>
<span class="t" style="left:316.9px;top:42.3px;font-size:13px;font-weight:700;color:#111;transform:scaleX(.728);transform-origin:0 0">Adobe</span>
<!-- paletton -->
<svg style="left:411.8px;top:43px" width="11.4" height="11.4" viewBox="0 0 11.4 11.4"><circle cx="5.700" cy="5.700" r="5.500" fill="#1b1916"/><path d="M2.700 3.800c1.700-1.400 4.300-1.400 5.900.1-.9.300-1.600.8-2 1.600l-.8 3.400-1.400-3.200c-.4-.9-1-1.500-1.700-1.900z" fill="#4f4630"/><circle cx="5.700" cy="5.700" r="4" fill="none" stroke="#3a3426" stroke-width=".6"/></svg>
<span class="t" style="left:423.6px;top:44px;font-size:9.9px;font-weight:700;font-style:italic;color:#1f1f1f;transform:scaleX(.845);transform-origin:0 0">PALETTON</span>
<!-- envato -->
<svg style="left:493px;top:44.3px" width="9.2" height="9.8" viewBox="0 0 9.2 9.8"><path d="M8.300.3c.9 1.300 1.300 5.700-1.300 7.900C4.900 10 1.700 9.500.7 6.900-.2 4.700 1.100 2.900 2.400 2.200c-.4 1.300-.3 2.800.3 3.700C3.500 3 5.600.9 8.300.3z" fill="#7cbf42"/></svg>
<span class="t" style="left:503.6px;top:40.85px;font-size:14.6px;font-weight:400;color:#151515;letter-spacing:.5px;-webkit-text-stroke:.38px #151515">envato</span>

<!-- ===== header ===== -->
<div class="a" style="left:0;top:0;width:898px;height:34.6px;background:#333"></div>
<div class="a" style="left:897px;top:0;width:1px;height:34.6px;background:#222"></div>
<div class="a" style="left:846.8px;top:7.2px;width:50.2px;height:18.2px;background:#2d2d2d;border-radius:2px"></div>
<!-- logo -->
<svg style="left:0;top:6px" width="72" height="24" viewBox="0 6 72 24" id="logo" fill="none" stroke-linecap="round" stroke-linejoin="round" stroke-width="4.300">
<path d="M53.700 12.300v5.900a4.200 4.200 0 0 1-8.400 0v-5.900" stroke="#a23aa5"/>
<path d="M58.900 21.900v-9.700h3.500a3 3 0 0 1 0 6h-3.300M62.500 18.400l3.600 3.500" stroke="#18a0e0" stroke-width="4.100"/>
<circle cx="36.700" cy="17.050" r="4.850" stroke="#e8354a"/>
<path d="M24.500 12.200v9.700h4.500" stroke="#f7901e"/>
<circle cx="15.400" cy="17.050" r="4.850" stroke="#f8c020"/>
<path d="M6 13.200a4.850 4.850 0 1 0 0 7.700" stroke="#4cb848"/>
</svg>
<span class="t" style="left:68.7px;top:7.4px;font-size:19.6px;font-weight:400;color:#fff;-webkit-text-stroke:.1px #333">Lovers</span>
<!-- search -->
<div class="a" style="left:450.8px;top:4.800px;width:197.400px;height:26px;background:#fff;border-radius:3px 0 0 3px"></div>
<div class="a" style="left:570px;top:10.500px;width:1px;height:15.500px;background:#ddd"></div>
<svg style="left:574.5px;top:10.800px" width="16" height="16" viewBox="0 0 16 16" fill="none" stroke="#2b8fd6" stroke-width="1.150" stroke-linejoin="round" stroke-linecap="round"><rect x=".7" y=".8" width="4.300" height="13.200"/><path d="M7.700 8.100l3.600-6 3.100 4.400-6.500 6.700h6.900V8.900"/></svg>
<svg style="left:630px;top:15.300px" width="9" height="7" viewBox="0 0 9 7" fill="none" stroke="#222" stroke-width="1.500" stroke-linecap="round" stroke-linejoin="round"><path d="M1.400 2l2.300 2.400L6 2"/></svg>
<div class="a" style="left:648.200px;top:4.800px;width:29px;height:26px;background:#df3a40;border-radius:0 3px 3px 0"></div>
<svg style="left:655.500px;top:10.500px" width="15" height="15" viewBox="0 0 15 15" fill="none" stroke="#fff" stroke-width="1.600" stroke-linecap="round"><circle cx="6.400" cy="6.400" r="4.600"/><path d="M9.800 9.800l3.400 3.400"/></svg>
<!-- create -->
<div class="a" style="left:683.8px;top:5.2px;width:76px;height:25.8px;background:#5ab947;border-radius:3px"></div>
<svg style="left:685px;top:7px" width="18" height="22" viewBox="0 0 18 22" fill="none" stroke="#fff" stroke-width="1.500" stroke-linejoin="round" stroke-linecap="round"><path d="M6.500 20.300H3.200a1.500 1.500 0 0 1-1.500-1.500V6L6 1.800h6.400a1.500 1.500 0 0 1 1.500 1.500v6.500"/><path d="M1.900 6.200h2.900a1.200 1.200 0 0 0 1.200-1.200V2"/><circle cx="11" cy="16" r="5" fill="#fff" stroke="none"/><path d="M11 13.400v5.200M8.400 16h5.200" stroke="#5ab947" stroke-width="1.700"/></svg>
<!-- chevrons -->
<svg style="left:0;top:0" width="900" height="35" viewBox="0 0 900 35" fill="none" stroke="#fff" stroke-width="1.700" stroke-linecap="round" stroke-linejoin="round">
<path d="M175.700 15.600l2.300 2.400 2.300-2.400M252.100 15.600l2.300 2.400 2.300-2.400M317.200 15.600l2.300 2.400 2.300-2.400M369.700 15.600l2.300 2.400 2.300-2.400M415 15.600l2.300 2.400 2.300-2.400"/>
<path d="M745.400 18.300l2.200 2.200 2.200-2.200" stroke-width="1.500"/>
<path d="M886.800 14.700l2.200 2.200 2.200-2.200" stroke-width="1.500"/>
</svg>
<!-- right edge strip / scrollbar hint -->
<div class="a" style="left:898px;top:0;width:2px;height:447px;background:#fff"></div>
<div class="a" style="left:898px;top:62px;width:1px;height:385px;background:#f3f3f3"></div>
<div class="a" style="left:899px;top:127px;width:1px;height:87px;background:#c9c9c9"></div>

<span class="t" style="left:139.2px;top:11.68px;font-size:10.3px;font-weight:400;color:#fff;letter-spacing:-0.141px;-webkit-text-stroke:.42px #fff;">Browse</span>
<span class="t" style="left:194.0px;top:11.68px;font-size:10.3px;font-weight:400;color:#fff;letter-spacing:0.236px;-webkit-text-stroke:.42px #fff;">Community</span>
<span class="t" style="left:269.8px;top:11.68px;font-size:10.3px;font-weight:400;color:#fff;letter-spacing:-0.002px;-webkit-text-stroke:.42px #fff;">Channels</span>
<span class="t" style="left:336.0px;top:11.68px;font-size:10.3px;font-weight:400;color:#fff;letter-spacing:-0.229px;-webkit-text-stroke:.42px #fff;">Trends</span>
<span class="t" style="left:388.4px;top:11.68px;font-size:10.3px;font-weight:400;color:#fff;letter-spacing:-0.089px;-webkit-text-stroke:.42px #fff;">Tools</span>
<span class="t" style="left:456.3px;top:13.47px;font-size:9.6px;font-weight:400;color:#aaa;letter-spacing:-0.193px;">Search palettes...</span>
<span class="t" style="left:593.8px;top:12.61px;font-size:9.2px;font-weight:700;color:#222;letter-spacing:-0.169px;">Palettes</span>
<span class="t" style="left:705.8px;top:13.20px;font-size:10.4px;font-weight:700;color:#fff;letter-spacing:0.390px;">Create</span>
<span class="t" style="left:790.7px;top:11.04px;font-size:9.4px;font-weight:700;color:#fff;transform:scaleX(0.9119);transform-origin:0 0;">Sign Up</span>
<span class="t" style="left:855.0px;top:11.04px;font-size:9.4px;font-weight:700;color:#fff;transform:scaleX(0.8782);transform-origin:0 0;">Log In</span>
<span class="t" style="left:355.0px;top:40.59px;font-size:8.4px;font-weight:400;color:#9babb8;letter-spacing:0.227px;-webkit-text-stroke:.2px #9babb8;">Creative</span>
<span class="t" style="left:355.0px;top:47.69px;font-size:8.4px;font-weight:400;color:#9babb8;letter-spacing:-0.113px;-webkit-text-stroke:.2px #9babb8;">Tools</span>
<span class="t" style="left:561.5px;top:40.59px;font-size:8.4px;font-weight:400;color:#9babb8;letter-spacing:0.060px;-webkit-text-stroke:.2px #9babb8;">Digital</span>
<span class="t" style="left:561.5px;top:46.69px;font-size:8.4px;font-weight:400;color:#9babb8;letter-spacing:0.243px;-webkit-text-stroke:.2px #9babb8;">Marketplace</span>
<span class="t" style="left:58.0px;top:163.87px;font-size:9.6px;font-weight:400;color:#555;transform:scaleX(0.9085);transform-origin:0 0;">Follow @COLOURlovers</span>
<span class="t" style="left:68.0px;top:214.34px;font-size:9.4px;font-weight:700;color:#fff;transform:scaleX(0.7798);transform-origin:0 0;">LOVERS PEEK</span>
<span class="t" style="left:108.5px;top:242.59px;font-size:9.7px;font-weight:400;color:#2b2b2b;letter-spacing:-0.124px;"><span class="m">GoldenHuesinBlue</span> <span class="on">on</span> <span class="m">night</span></span>
<span class="t" style="left:108.5px;top:253.46px;font-size:9.5px;font-weight:400;color:#9e9e9e;letter-spacing:-0.151px;">Beautiful opalescent effect... L O V E</span>
<span class="t" style="left:108.5px;top:273.74px;font-size:9.7px;font-weight:400;color:#2b2b2b;letter-spacing:-0.155px;"><span class="m">Bubbletripper</span> <span class="on">on</span> <span class="m gs">Βιυε Ηεαυεη</span></span>
<span class="t" style="left:108.5px;top:284.51px;font-size:9.5px;font-weight:400;color:#9e9e9e;letter-spacing:0.041px;">Beautiful! =)</span>
<span class="t" style="left:108.5px;top:304.89px;font-size:9.7px;font-weight:400;color:#2b2b2b;letter-spacing:-0.109px;"><span class="m">BlueberryLane</span> <span class="on">on</span> <span class="m">Your Delphiniums</span></span>
<span class="t" style="left:108.5px;top:315.56px;font-size:9.5px;font-weight:400;color:#9e9e9e;letter-spacing:0.020px;">Oh my gosh these colors are</span>
<span class="t" style="left:108.5px;top:336.04px;font-size:9.7px;font-weight:400;color:#2b2b2b;letter-spacing:-0.128px;"><span class="m">BlueberryLane</span> <span class="on">on</span> <span class="m">Contrast &amp;</span></span>
<span class="t" style="left:108.5px;top:346.49px;font-size:9.7px;font-weight:400;color:#2b2b2b;letter-spacing:0.170px;"><span class="m">Sequence</span></span>
<span class="t" style="left:108.5px;top:367.19px;font-size:9.7px;font-weight:400;color:#2b2b2b;letter-spacing:-0.158px;"><span class="m">BlueberryLane</span> <span class="on">on</span> <span class="m">Quench Enough</span></span>
<span class="t" style="left:108.5px;top:377.66px;font-size:9.5px;font-weight:400;color:#9e9e9e;letter-spacing:-0.165px;">Love this!!</span>
<span class="t" style="left:108.5px;top:399.34px;font-size:9.7px;font-weight:400;color:#2b2b2b;letter-spacing:-0.191px;"><span class="m">BlueberryLane</span> <span class="on">on</span> <span class="m">Quench Love</span></span>
<span class="t" style="left:108.5px;top:408.71px;font-size:9.5px;font-weight:400;color:#9e9e9e;letter-spacing:-0.193px;">So beautiful.....</span>
<span class="t" style="left:108.5px;top:430.49px;font-size:9.7px;font-weight:400;color:#2b2b2b;letter-spacing:-0.122px;"><span class="m">BlueberryLane</span> <span class="on">on</span> <span class="m">Лк</span></span>
<span class="t" style="left:108.5px;top:326.16px;font-size:9.5px;font-weight:400;color:#b9b9b9;letter-spacing:-0.080px;"><span class="clip" style="height:2.3px">so lovely! Bold blues.</span></span>
<span class="t" style="left:108.5px;top:356.56px;font-size:9.5px;font-weight:400;color:#b9b9b9;letter-spacing:-0.024px;"><span class="clip" style="height:2.6px">Beautiful deep! Bold pink</span></span>
<span class="t" style="left:136.7px;top:441.71px;font-size:10.5px;font-weight:400;color:#aaa;transform:scaleX(0.7007);transform-origin:0 0;">(:</span>
<span class="t" style="left:330.7px;top:95.99px;font-size:9.7px;font-weight:400;color:#303030;letter-spacing:-0.020px;-webkit-text-stroke:.1px #303030;">Verano Miriam 2cep</span>
<span class="t" style="left:330.7px;top:105.59px;font-size:9.7px;font-weight:400;color:#565656;letter-spacing:0.035px;">by miriam.felipe</span>
<span class="t" style="left:489.3px;top:96.77px;font-size:8.9px;font-weight:400;color:#9c9c9c;letter-spacing:0.062px;">0</span>
<span class="t" style="left:330.7px;top:164.19px;font-size:9.7px;font-weight:400;color:#303030;letter-spacing:-0.026px;-webkit-text-stroke:.1px #303030;">Lieblingsfarben_02</span>
<span class="t" style="left:330.7px;top:173.79px;font-size:9.7px;font-weight:400;color:#565656;letter-spacing:-0.019px;">by Aridwen</span>
<span class="t" style="left:489.3px;top:164.97px;font-size:8.9px;font-weight:400;color:#9c9c9c;letter-spacing:0.062px;">0</span>
<span class="t" style="left:330.7px;top:233.39px;font-size:9.7px;font-weight:400;color:#303030;letter-spacing:-0.165px;-webkit-text-stroke:.1px #303030;">Lieblingsfarben_01</span>
<span class="t" style="left:330.7px;top:241.99px;font-size:9.7px;font-weight:400;color:#565656;letter-spacing:-0.019px;">by Aridwen</span>
<span class="t" style="left:489.3px;top:234.17px;font-size:8.9px;font-weight:400;color:#9c9c9c;letter-spacing:0.062px;">0</span>
<span class="t" style="left:330.7px;top:300.59px;font-size:9.7px;font-weight:400;color:#303030;letter-spacing:0.234px;-webkit-text-stroke:.1px #303030;">adromeda</span>
<span class="t" style="left:330.7px;top:310.19px;font-size:9.7px;font-weight:400;color:#565656;transform:scaleX(0.8916);transform-origin:0 0;">by MSZC</span>
<span class="t" style="left:489.3px;top:302.37px;font-size:8.9px;font-weight:400;color:#9c9c9c;letter-spacing:0.062px;">0</span>
<span class="t" style="left:330.7px;top:368.79px;font-size:9.7px;font-weight:400;color:#303030;letter-spacing:-0.039px;-webkit-text-stroke:.1px #303030;">Cavern</span>
<span class="t" style="left:330.7px;top:379.39px;font-size:9.7px;font-weight:400;color:#565656;letter-spacing:-0.140px;">by SarahBensing</span>
<span class="t" style="left:489.3px;top:369.57px;font-size:8.9px;font-weight:400;color:#9c9c9c;letter-spacing:0.062px;">0</span>
<span class="t" style="left:385.0px;top:403.70px;font-size:9.8px;font-weight:400;color:#555;transform:scaleX(0.9214);transform-origin:0 0;">View More ›</span>
<span class="t" style="left:503.7px;top:95.99px;font-size:9.7px;font-weight:400;color:#303030;letter-spacing:-0.189px;-webkit-text-stroke:.1px #303030;">Mystic Moon</span>
<span class="t" style="left:503.7px;top:105.59px;font-size:9.7px;font-weight:400;color:#565656;letter-spacing:-0.054px;">by Wordofmouse</span>
<span class="t" style="left:662.3px;top:96.77px;font-size:8.9px;font-weight:400;color:#9c9c9c;letter-spacing:0.062px;">0</span>
<span class="t" style="left:503.7px;top:164.19px;font-size:9.7px;font-weight:400;color:#303030;letter-spacing:0.078px;-webkit-text-stroke:.1px #303030;">khhjhjk</span>
<span class="t" style="left:503.7px;top:173.79px;font-size:9.7px;font-weight:400;color:#565656;letter-spacing:0.025px;">by samisco</span>
<span class="t" style="left:662.3px;top:164.97px;font-size:8.9px;font-weight:400;color:#9c9c9c;letter-spacing:0.062px;">0</span>
<span class="t" style="left:503.7px;top:233.39px;font-size:9.7px;font-weight:400;color:#303030;letter-spacing:-0.032px;-webkit-text-stroke:.1px #303030;">Nightshade</span>
<span class="t" style="left:503.7px;top:241.99px;font-size:9.7px;font-weight:400;color:#565656;letter-spacing:-0.054px;">by Wordofmouse</span>
<span class="t" style="left:662.3px;top:234.17px;font-size:8.9px;font-weight:400;color:#9c9c9c;letter-spacing:0.062px;">0</span>
<span class="t" style="left:503.7px;top:300.59px;font-size:9.7px;font-weight:400;color:#303030;letter-spacing:-0.229px;-webkit-text-stroke:.1px #303030;">Lumis</span>
<span class="t" style="left:503.7px;top:310.19px;font-size:9.7px;font-weight:400;color:#565656;letter-spacing:-0.054px;">by Wordofmouse</span>
<span class="t" style="left:662.3px;top:302.37px;font-size:8.9px;font-weight:400;color:#9c9c9c;letter-spacing:0.062px;">0</span>
<span class="t" style="left:503.7px;top:368.79px;font-size:9.7px;font-weight:400;color:#303030;letter-spacing:0.045px;-webkit-text-stroke:.1px #303030;">Лк</span>
<span class="t" style="left:503.7px;top:379.39px;font-size:9.7px;font-weight:400;color:#565656;letter-spacing:-0.058px;">by Mirasavchyn</span>
<span class="t" style="left:662.3px;top:369.57px;font-size:8.9px;font-weight:400;color:#9c9c9c;letter-spacing:0.062px;">0</span>
<span class="t" style="left:558.0px;top:403.70px;font-size:9.8px;font-weight:400;color:#555;transform:scaleX(0.9214);transform-origin:0 0;">View More ›</span>
<span class="t" style="left:676.7px;top:95.99px;font-size:9.7px;font-weight:400;color:#303030;transform:scaleX(0.8930);transform-origin:0 0;-webkit-text-stroke:.1px #303030;">Ппп</span>
<span class="t" style="left:676.7px;top:105.59px;font-size:9.7px;font-weight:400;color:#565656;letter-spacing:-0.058px;">by Mirasavchyn</span>
<span class="t" style="left:835.3px;top:96.77px;font-size:8.9px;font-weight:400;color:#9c9c9c;letter-spacing:0.062px;">0</span>
<span class="t" style="left:676.7px;top:164.19px;font-size:9.7px;font-weight:400;color:#303030;transform:scaleX(0.8930);transform-origin:0 0;-webkit-text-stroke:.1px #303030;">Ппп</span>
<span class="t" style="left:676.7px;top:173.79px;font-size:9.7px;font-weight:400;color:#565656;letter-spacing:-0.058px;">by Mirasavchyn</span>
<span class="t" style="left:835.3px;top:164.97px;font-size:8.9px;font-weight:400;color:#9c9c9c;letter-spacing:0.062px;">0</span>
<span class="t" style="left:676.7px;top:233.39px;font-size:9.7px;font-weight:400;color:#303030;letter-spacing:0.125px;-webkit-text-stroke:.1px #303030;">lightpurp</span>
<span class="t" style="left:676.7px;top:241.99px;font-size:9.7px;font-weight:400;color:#565656;transform:scaleX(0.8916);transform-origin:0 0;">by MSZC</span>
<span class="t" style="left:835.3px;top:234.17px;font-size:8.9px;font-weight:400;color:#9c9c9c;letter-spacing:0.062px;">0</span>
<span class="t" style="left:676.7px;top:300.59px;font-size:9.7px;font-weight:400;color:#303030;letter-spacing:-0.147px;-webkit-text-stroke:.1px #303030;">Clay Pottery</span>
<span class="t" style="left:676.7px;top:310.19px;font-size:9.7px;font-weight:400;color:#565656;letter-spacing:0.043px;">by renniecat</span>
<span class="t" style="left:835.3px;top:302.37px;font-size:8.9px;font-weight:400;color:#9c9c9c;letter-spacing:0.062px;">0</span>
<span class="t" style="left:676.7px;top:368.79px;font-size:9.7px;font-weight:400;color:#303030;letter-spacing:-0.040px;-webkit-text-stroke:.1px #303030;">lila</span>
<span class="t" style="left:676.7px;top:379.39px;font-size:9.7px;font-weight:400;color:#565656;letter-spacing:-0.000px;">by rgb85</span>
<span class="t" style="left:835.3px;top:369.57px;font-size:8.9px;font-weight:400;color:#9c9c9c;letter-spacing:0.062px;">0</span>
<span class="t" style="left:731.0px;top:403.70px;font-size:9.8px;font-weight:400;color:#555;transform:scaleX(0.9214);transform-origin:0 0;">View More ›</span>
<span class="t" style="left:361.8px;top:442.17px;font-size:9.6px;font-weight:700;color:#fff;transform:scaleX(0.7655);transform-origin:0 0;">SHAPES</span>
</body></html>
